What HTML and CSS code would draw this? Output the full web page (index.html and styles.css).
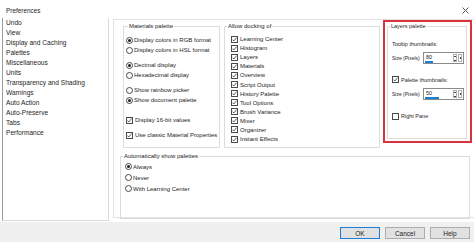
FILE: index.html
```html
<!DOCTYPE html>
<html lang="en">
<head>
    <meta charset="UTF-8">
    <title>Preferences</title>
    <link rel="stylesheet" href="styles.css">
</head>
<body>

    <div class="dialog">
        <div class="titlebar">
            <span class="title">Preferences</span>
            <svg class="close" width="7" height="7" viewBox="0 0 7 7"><path d="M0.5 0.5 L6.5 6.5 M6.5 0.5 L0.5 6.5" stroke="#444" stroke-width="0.9"/></svg>
        </div>

        <div class="main">
            <ul class="nav">
                <li>Undo</li>
                <li>View</li>
                <li>Display and Caching</li>
                <li>Palettes</li>
                <li>Miscellaneous</li>
                <li>Units</li>
                <li>Transparency and Shading</li>
                <li>Warnings</li>
                <li>Auto Action</li>
                <li>Auto-Preserve</li>
                <li>Tabs</li>
                <li>Performance</li>
            </ul>

            <div class="page">
                <div class="top-row">
                    <fieldset class="group materials">
                        <legend>Materials palette</legend>
                        <div class="opt"><span class="radio on"></span>Display colors in RGB format</div>
                        <div class="opt"><span class="radio"></span>Display colors in HSL format</div>
                        <div class="opt sep"><span class="radio on"></span>Decimal display</div>
                        <div class="opt"><span class="radio"></span>Hexadecimal display</div>
                        <div class="opt sep"><span class="radio"></span>Show rainbow picker</div>
                        <div class="opt"><span class="radio on"></span>Show document palette</div>
                        <div class="opt sep-big"><span class="check on"></span>Display 16-bit values</div>
                        <div class="opt sep"><span class="check on"></span>Use classic Material Properties</div>
                    </fieldset>

                    <fieldset class="group docking">
                        <legend>Allow docking of</legend>
                        <div class="opt"><span class="check on"></span>Learning Center</div>
                        <div class="opt"><span class="check on"></span>Histogram</div>
                        <div class="opt"><span class="check on"></span>Layers</div>
                        <div class="opt"><span class="check on"></span>Materials</div>
                        <div class="opt"><span class="check on"></span>Overview</div>
                        <div class="opt"><span class="check on"></span>Script Output</div>
                        <div class="opt"><span class="check on"></span>History Palette</div>
                        <div class="opt"><span class="check on"></span>Tool Options</div>
                        <div class="opt"><span class="check on"></span>Brush Variance</div>
                        <div class="opt"><span class="check on"></span>Mixer</div>
                        <div class="opt"><span class="check on"></span>Organizer</div>
                        <div class="opt"><span class="check on"></span>Instant Effects</div>
                    </fieldset>

                    <div class="highlight">
                        <fieldset class="group layers">
                            <legend>Layers palette</legend>
                            <div class="opt">Tooltip thumbnails:</div>
                            <div class="size-row">
                                <span class="size-label">Size (Pixels)</span>
                                <span class="spin">
                                    <span class="spin-value">80<span class="bar" style="width: 8px"></span></span>
                                    <span class="spin-btns"><span class="arrows"></span><span class="drop"></span></span>
                                </span>
                            </div>
                            <div class="opt thumbs"><span class="check on"></span>Palette thumbnails:</div>
                            <div class="size-row">
                                <span class="size-label">Size (Pixels)</span>
                                <span class="spin">
                                    <span class="spin-value">50<span class="bar" style="width: 14px"></span></span>
                                    <span class="spin-btns"><span class="arrows"></span><span class="drop"></span></span>
                                </span>
                            </div>
                            <div class="opt pane"><span class="check"></span>Right Pane</div>
                        </fieldset>
                    </div>
                </div>

                <fieldset class="group autoshow">
                    <legend>Automatically show palettes</legend>
                    <div class="opt"><span class="radio on"></span>Always</div>
                    <div class="opt"><span class="radio"></span>Never</div>
                    <div class="opt"><span class="radio"></span>With Learning Center</div>
                </fieldset>
            </div>
        </div>

        <div class="footer">
            <button class="btn default">OK</button>
            <button class="btn">Cancel</button>
            <button class="btn">Help</button>
        </div>
    </div>

</body>
</html>
```

FILE: styles.css
```css
/* Dialog frame */
body {
    margin: 0;
    font-family: "Liberation Sans", Arial, sans-serif;
    color: #1e1e1e;
    background: #f0f0f0;
}

.dialog {
    width: 474px;
    height: 242px;
    display: flex;
    flex-direction: column;
    background: #f0f0f0;
    overflow: hidden;
}

.titlebar {
    height: 18px;
    display: flex;
    align-items: center;
    justify-content: space-between;
    padding: 2px 5px 0 6px;
    box-sizing: border-box;
    background: #ffffff;
    font-size: 6.4px;
}

.main {
    height: 204px;
    display: flex;
    gap: 4px;
    background: #ffffff;
}

/* Left category list */
.nav {
    width: 107px;
    margin: 0 0 1px 2px;
    padding: 0 0 0 3px;
    box-sizing: border-box;
    list-style: none;
    border: 1px solid #dadada;
    border-left-color: #9c9c9c;
    border-top: none;
    font-size: 6.6px;
    line-height: 10px;
}

.nav li {
    white-space: nowrap;
}

/* Right page */
.page {
    flex: 1;
    margin: 1px 0 4px;
    border: 1px solid #e2e2e2;
    border-right: none;
}

.top-row {
    display: flex;
    align-items: flex-start;
}

.group {
    margin: 0;
    padding: 0;
    box-sizing: border-box;
    border: 1px solid #dcdcdc;
    font-size: 6px;
}

.group legend {
    margin-left: 2px;
    padding: 0 1px;
    line-height: 9px;
    font-size: 6px;
}

.opt {
    display: flex;
    align-items: center;
    gap: 1px;
    height: 10px;
    white-space: nowrap;
}

.materials {
    width: 97px;
    height: 126px;
    margin: 2px 0 0 9px;
    padding: 4px 0 0 2px;
}

.materials .sep {
    margin-top: 5px;
}

.materials .sep-big {
    margin-top: 10px;
}

.docking {
    width: 156px;
    height: 126px;
    margin: 2px 0 0 4px;
    padding: 3.5px 0 0 6px;
}

.docking .opt {
    height: 9.1px;
    gap: 1px;
}

.docking legend {
    margin-left: -4px;
}

/* Annotation box */
.highlight {
    width: 89px;
    height: 123px;
    margin-left: 3px;
    padding: 0 3px 0 2px;
    box-sizing: border-box;
    border: 2px solid #d8323c;
}

.layers {
    height: 117px;
    padding: 8.5px 0 0 4px;
    font-size: 5.5px;
}

.layers legend {
    margin-left: -2px;
    font-size: 5.5px;
}

.layers .opt {
    height: 9px;
}

.size-row {
    display: flex;
    align-items: center;
    height: 12px;
    margin-top: 3.5px;
    white-space: nowrap;
}

.size-label {
    width: 31px;
    flex-shrink: 0;
    font-size: 5px;
}

.spin {
    width: 41px;
    height: 12px;
    display: flex;
    justify-content: space-between;
    box-sizing: border-box;
    border: 1px solid #8a8a8a;
    background: #ffffff;
    font-size: 5.5px;
}

.spin-value {
    position: relative;
    padding: 1px 0 0 2px;
    line-height: 7px;
}

.bar {
    position: absolute;
    left: 1px;
    top: 8px;
    height: 2px;
    background: #1a7fd6;
}

.spin-btns {
    display: flex;
    gap: 1px;
    padding: 1px 1px 0 0;
}

.arrows {
    width: 4px;
    height: 8px;
    border: 1px solid #b0b0b0;
    box-sizing: border-box;
    background:
        linear-gradient(#444, #444) center 1px / 2px 1px no-repeat,
        linear-gradient(#444, #444) center 5px / 2px 1px no-repeat;
}

.drop {
    width: 4px;
    height: 8px;
    border: 1px solid #b0b0b0;
    box-sizing: border-box;
    background: linear-gradient(#444, #444) center / 1px 2px no-repeat;
}

.layers .thumbs {
    margin-top: 11px;
}

.layers .pane {
    margin-top: 12px;
}

.autoshow {
    height: 67px;
    margin: 4px 4px 0 6px;
    padding: 0 0 0 4px;
}

.autoshow legend {
    margin-left: -2px;
}

.autoshow .opt {
    height: 11px;
}

/* Radio buttons and checkboxes */
.radio {
    width: 7px;
    height: 7px;
    box-sizing: border-box;
    border: 1px solid #4a4a4a;
    border-radius: 50%;
    background: #ffffff;
    flex-shrink: 0;
    display: flex;
    align-items: center;
    justify-content: center;
}

.radio.on::after {
    content: "";
    width: 3px;
    height: 3px;
    border-radius: 50%;
    background: #1e1e1e;
}

.check {
    width: 7px;
    height: 7px;
    box-sizing: border-box;
    border: 1px solid #4a4a4a;
    background: #ffffff;
    flex-shrink: 0;
    margin-right: 1px;
}

.check.on {
    background: #ffffff url("data:image/svg+xml,%3Csvg xmlns='http://www.w3.org/2000/svg' width='5' height='5' viewBox='0 0 5 5'%3E%3Cpath d='M0.4 2.6 L1.8 4 L4.6 0.6' fill='none' stroke='%23333' stroke-width='0.8'/%3E%3C/svg%3E") center / 5px 5px no-repeat;
}

/* Bottom buttons */
.footer {
    height: 20px;
    display: flex;
    justify-content: flex-end;
    gap: 5px;
    padding: 5px 4px 0 0;
    box-sizing: border-box;
}

.btn {
    width: 40px;
    height: 12px;
    padding: 0;
    border: 1px solid #adadad;
    background: #e1e1e1;
    font-family: "Liberation Sans", Arial, sans-serif;
    font-size: 6.5px;
    color: #1e1e1e;
}

.btn.default {
    border-color: #1a7fd6;
}
```
